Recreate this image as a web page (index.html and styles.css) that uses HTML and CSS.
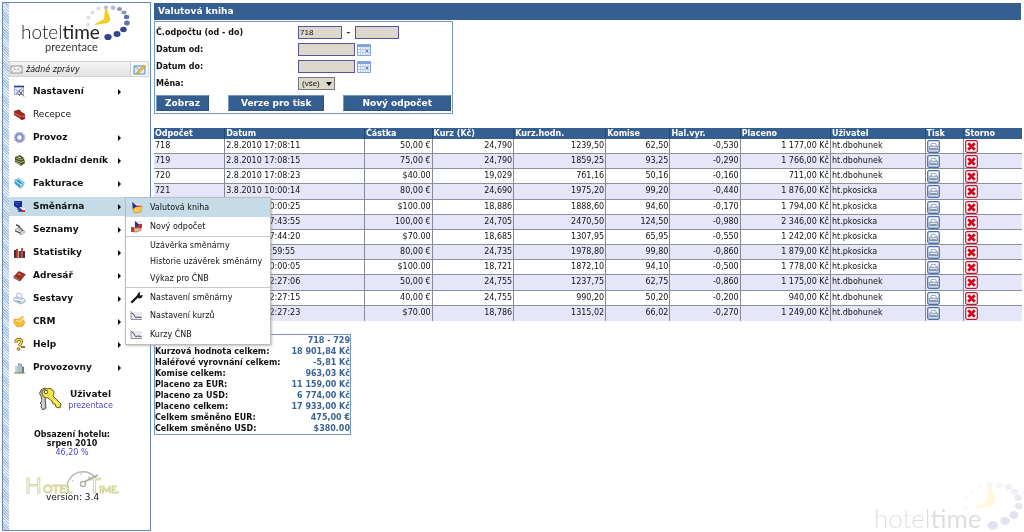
FILE: index.html
```
<!DOCTYPE html>
<html lang="cs">
<head>
<meta charset="utf-8">
<title>Valutová kniha</title>
<link rel="stylesheet" href="styles.css">
</head>
<body>
<svg class="defs" aria-hidden="true">
  <defs>
    <linearGradient id="blueface" x2="0" y2="1"><stop offset="0" stop-color="#fff"/><stop offset="1" stop-color="#c3d3ee"/></linearGradient>
    <symbol id="clock" viewBox="0 0 130 41">
      <text x="21" y="38" class="brand-text">hotel<tspan class="brand-strong">time</tspan></text>
      <g fill="#d9dbe6"><circle cx="88" cy="23.500" r="1.800"/><circle cx="88.500" cy="16.500" r="1.800"/><circle cx="92.500" cy="11.500" r="2"/><circle cx="98.500" cy="7.500" r="2"/></g>
      <g fill="#b4bad2"><circle cx="106" cy="6.500" r="2.100"/><circle cx="113" cy="6.800" r="2.200"/></g>
      <g fill="#8d97bd"><ellipse cx="119.500" cy="8" rx="2.600" ry="2.100"/><ellipse cx="124" cy="11.500" rx="2.600" ry="2.100"/></g>
      <g fill="#626fa5"><ellipse cx="126.600" cy="16" rx="2.700" ry="2.200"/><ellipse cx="127" cy="22" rx="2.800" ry="2.500"/></g>
      <g fill="#34458a"><ellipse cx="123.500" cy="28.500" rx="3.300" ry="2.800"/><ellipse cx="117" cy="33" rx="3.500" ry="2.900"/><ellipse cx="108" cy="36" rx="3.700" ry="3.100"/></g>
      <path d="M105 8h2l3 9q1 4-3 5l-12 2v-1l9-5z" fill="#f2cd22"/>
    </symbol>
    <symbol id="print" viewBox="0 0 13 13"><rect x=".7" y=".7" width="11.600" height="11.600" rx="1.500" fill="url(#blueface)" stroke="#4a6ea8" stroke-width="1.200"/><path d="M4 6l.5-2.500h4L9.500 6" fill="#fff" stroke="#7d8ea8" stroke-width=".7"/><path d="M2.800 6.200h7.600l.4 3.300H2.400z" fill="#dfe6ef" stroke="#62738e" stroke-width=".7"/><path d="M3.500 8.500h6" stroke="#66758c" stroke-width=".7"/></symbol>
    <symbol id="cancel" viewBox="0 0 13 13"><rect x=".7" y=".7" width="11.600" height="11.600" rx="1.500" fill="#fff" stroke="#c8102a" stroke-width="1.200"/><path d="M3.200 3.200l6.600 6.600M9.800 3.200l-6.600 6.600" stroke="#cf0a1e" stroke-width="2.800"/></symbol>
    <symbol id="calendar" viewBox="0 0 14 12"><rect width="14" height="12" rx="1" fill="#7fa3dc"/><rect x="1" y="3" width="12" height="8" fill="#edf3fc"/><path d="M1 5.500h12M1 8.500h12M3.500 3v8M6 3v8M8.500 3v8M11 3v8" stroke="#a9bfe3" stroke-width=".7"/><rect x="9" y="6" width="2" height="2" fill="#5d82bd"/></symbol>
    <symbol id="chart" viewBox="0 0 13 13"><rect x="1" y="3" width="11" height="7" fill="#e9eaee"/><path d="M1 2v8.500h11" fill="none" stroke="#888" stroke-width=".9"/><path d="M1.500 4q2 0 3 3t3 1l4 .5" fill="none" stroke="#454b65" stroke-width="1"/></symbol>
  </defs>
</svg>
<svg class="watermark" aria-hidden="true"><use href="#clock"/></svg>

<div class="page">
  <aside class="sidebar">
    <div class="logo">
      <svg class="logo-mark" viewBox="0 0 130 41" role="img" aria-label="hoteltime"><use href="#clock"/></svg>
      <div class="logo-sub">prezentace</div>
    </div>
    <div class="messages">
      <svg class="icon" viewBox="0 0 13 13"><path d="M1 3h11v7H1z" fill="#fff" stroke="#888" stroke-width=".9"/><path d="M1 3l5.500 4L12 3M1 10l4-4M12 10L8 6" fill="none" stroke="#999" stroke-width=".7"/></svg>
      <em>žádné zprávy</em>
      <button class="compose" aria-label="Nová zpráva"><svg class="icon" viewBox="0 0 13 13"><path d="M1 3h11v8H1z" fill="#dceafa" stroke="#5688bd"/><path d="M1 3l5.500 4L12 3" fill="none" stroke="#5688bd" stroke-width=".7"/><path d="M4 9l7-7 1.500 1.500-7 7-2 .4z" fill="#f4c33a" stroke="#b98313" stroke-width=".6"/></svg></button>
    </div>
    <nav class="menu">
      <a href="#"><svg class="icon" viewBox="0 0 13 13"><path d="M1.500 1.500h9v8h-9z" fill="#eef1fb" stroke="#7c83b5" stroke-width=".7"/><path d="M1 1.500h10" stroke="#27388d" stroke-width="1.600"/><path d="M3 4.500l2 2 4-3M3 8h3" fill="none" stroke="#3d4d94" stroke-width=".8"/><path d="M6 6l5 5.500M10 5l-4 6" stroke="#535b83" stroke-width="1"/></svg><span>Nastavení</span><i class="arrow"></i></a>
      <a href="#" class="plain"><svg class="icon" viewBox="0 0 13 13"><path d="M1 3l4-1 7 4v5l-3 1-8-5z" fill="#a52720"/><path d="M1 5l8 4 3-1" fill="none" stroke="#e0897a" stroke-width=".8"/><path d="M9 9v3M4 3l2-1 2 1.500" fill="none" stroke="#521310"/></svg><span>Recepce</span></a>
      <a href="#"><svg class="icon" viewBox="0 0 13 13"><circle cx="6.500" cy="6.500" r="3.700" fill="none" stroke="#8d91cc" stroke-width="3"/><circle cx="6.500" cy="6.500" r="5" fill="none" stroke="#b5b8e4" stroke-width="1.500" stroke-dasharray="2 2"/></svg><span>Provoz</span><i class="arrow"></i></a>
      <a href="#"><svg class="icon" viewBox="0 0 13 13"><path d="M2 3l5-2 4 3 1 5-4 3-6-4z" fill="#48502a"/><path d="M3 4l5 2 3-2M2.500 6.500l5.500 2 3.500-1.500M3 8.500l5 2" fill="none" stroke="#b6bd78" stroke-width=".9"/><path d="M5 3l3 1" stroke="#dde1b1"/></svg><span>Pokladní deník</span><i class="arrow"></i></a>
      <a href="#"><svg class="icon" viewBox="0 0 13 13"><path d="M1 3l5-2 6 5-4 6-6-5z" fill="#39a0c5"/><path d="M1 3l7 5 4-2M8 8v4" fill="none" stroke="#e4f7fc" stroke-width=".9"/><path d="M3 3l3-1 4 4" fill="none" stroke="#9bdcf0" stroke-width="1.200"/></svg><span>Fakturace</span><i class="arrow"></i></a>
      <div class="open">
        <a href="#" aria-expanded="true"><svg class="icon" viewBox="0 0 13 13"><path d="M1 1h8v6H6v2L1 6z" fill="#1b2b9d"/><path d="M2.500 2.500h1m2 0h1m-3 2h1" stroke="#7782cf"/><path d="M6 7v5M4 9h2" stroke="#26328d" stroke-width="1.200"/><path d="M7 8h5v2H7z" fill="#fff"/><path d="M7 10h5v2H7z" fill="#d52b35"/><path d="M6.500 7.500l3 2.500-3 2z" fill="#1c3c9a"/></svg><span>Směnárna</span><i class="arrow"></i></a>
        <div class="submenu">
          <a href="#" class="current"><svg class="icon" viewBox="0 0 13 13"><path d="M2 6h4l1-1h5l-1 6-7 1z" fill="#f6c64f" stroke="#c28b26" stroke-width=".6"/><path d="M4 3l7 1-1 2-5-.5z" fill="#fff"/><path d="M5 4.500h6l-1 1.500H6z" fill="#d63733"/><path d="M2 1l5 4-4 3z" fill="#1b329c"/></svg><span>Valutová kniha</span></a>
          <a href="#"><svg class="icon" viewBox="0 0 13 13"><path d="M4 1h8v4H4z" fill="#e8e9f1"/><path d="M5 4h7v4H5z" fill="#c92f32"/><path d="M5 1l4 3.500L5 8z" fill="#25308f"/><path d="M1 7h3v5H1z" fill="#b64136"/><path d="M4 8l3 0 4 0v2l-4 2H4z" fill="#e5b896" stroke="#8b553c" stroke-width=".6"/></svg><span>Nový odpočet</span></a>
          <a href="#" class="short ruled"><span>Uzávěrka směnárny</span></a>
          <a href="#" class="short"><span>Historie uzávěrek směnárny</span></a>
          <a href="#" class="short"><span>Výkaz pro ČNB</span></a>
          <a href="#" class="ruled"><svg class="icon" viewBox="0 0 13 13"><path d="M2 11l6-6" stroke="#151515" stroke-width="2.300" stroke-linecap="round"/><path d="M7 5l1-3 2.500-1-1 2.500 1 1L13 4l-1.500 3-3 .5z" fill="#151515"/></svg><span>Nastavení směnárny</span></a>
          <a href="#"><svg class="icon"><use href="#chart"/></svg><span>Nastavení kurzů</span></a>
          <a href="#"><svg class="icon"><use href="#chart"/></svg><span>Kurzy ČNB</span></a>
        </div>
      </div>
      <a href="#"><svg class="icon" viewBox="0 0 13 13"><path d="M2 7l6 5 4-3-6-5z" fill="#e5e5e5" stroke="#777" stroke-width=".7"/><path d="M3 2q3 0 4 3l3 3M2 8l6 2" fill="none" stroke="#555" stroke-width="1.300"/><path d="M5 6l4 3" stroke="#aaa"/></svg><span>Seznamy</span><i class="arrow"></i></a>
      <a href="#"><svg class="icon" viewBox="0 0 13 13"><path d="M1 4h2v8H1z" fill="#49303c"/><path d="M3 3h2v9H3z" fill="#b73939"/><path d="M6 5h2v7H6z" fill="#423e75"/><path d="M8 2h2v10H8z" fill="#cd4942"/><path d="M10 5h2v7h-2z" fill="#403442"/><path d="M5.500 5v7" stroke="#e5aa6d"/></svg><span>Statistiky</span><i class="arrow"></i></a>
      <a href="#"><svg class="icon" viewBox="0 0 13 13"><path d="M1 7l5-5 6 3-5 6z" fill="#a32e1b"/><path d="M1 7v2l6 3 5-6V5l-5 6z" fill="#d9b3a5" stroke="#662318" stroke-width=".8"/><path d="M5 5l3 1" stroke="#e68a62" stroke-width="1.200"/></svg><span>Adresář</span><i class="arrow"></i></a>
      <a href="#"><svg class="icon" viewBox="0 0 13 13"><path d="M3 6l1-5 5 1v4" fill="#f4faff" stroke="#99adc0" stroke-width=".7"/><path d="M1 6l3-1 8 2v3l-4 2-7-3z" fill="#d3dce6" stroke="#8d9bab" stroke-width=".7"/><path d="M1 7l7 2 4-2" fill="none" stroke="#f8fbff"/><path d="M4 9l4 1" stroke="#6e8db0"/></svg><span>Sestavy</span><i class="arrow"></i></a>
      <a href="#"><svg class="icon" viewBox="0 0 13 13"><path d="M1 4l5 0 4-3 0 4 2 2-2 4-6 1-3-4z" fill="#f7bd38" stroke="#d99322" stroke-width=".6"/><path d="M3 5l4 2 3-4" fill="none" stroke="#ffe9a4" stroke-width="1.300"/></svg><span>CRM</span><i class="arrow"></i></a>
      <a href="#"><svg class="icon" viewBox="0 0 13 13"><path d="M3 5V3q1-2 4-1.500 2.500 1 1 3.500L6 8" fill="none" stroke="#6c5412" stroke-width="3"/><path d="M3 5V3q1-2 4-1.500 2.500 1 1 3.500L6 8" fill="none" stroke="#f3d33b" stroke-width="1.700"/><circle cx="5.500" cy="11" r="1.500" fill="#e4bf2e" stroke="#6c5412" stroke-width=".6"/><path d="M8 8h4v2H8z" fill="#84763c"/></svg><span>Help</span><i class="arrow"></i></a>
      <a href="#"><svg class="icon" viewBox="0 0 13 13"><path d="M2 5h3v7H2z" fill="#b8c5ca"/><path d="M5 2l4 1v9H5z" fill="#8ea8b1"/><path d="M9 5l2 1v6H9z" fill="#637e8b"/><path d="M6 4v7M8 5v6M3 6v5" stroke="#e5f0f2" stroke-width=".7"/><path d="M1 12h11" stroke="#708c64"/></svg><span>Provozovny</span><i class="arrow"></i></a>
    </nav>
    <div class="user">
      <svg class="keys" viewBox="0 0 25 25"><path d="M4 3q5-4 7 1 0 4-3 5l1 12-3 2-2-3 1-2-2-2 2-2-1-5Q1 7 4 3z" fill="#bbb" stroke="#555" stroke-width="1"/><path d="M6 11v10" stroke="#eee"/><path d="M9 2q6-2 8 3 0 3-1 4l8 8-1 4-4-1-1-3-2 0-1-3-4-3q-6 0-6-6 1-3 4-3z" fill="#f2e541" stroke="#635c20" stroke-width="1"/><circle cx="9" cy="5" r="1.700" fill="#fff" stroke="#635c20"/><path d="M13 9l9 10" stroke="#fff9a0"/></svg>
      <div><b>Uživatel</b><a href="#">prezentace</a></div>
    </div>
    <div class="occupancy"><b>Obsazení hotelu:<br>srpen 2010</b><span>46,20 %</span></div>
    <div class="product">
      <svg class="product-mark" viewBox="0 0 100 34" role="img" aria-label="Hotel Time">
        <path d="M44 21A16 16 0 0 1 74 13" fill="none" stroke="#b8b8ba" stroke-width="1.500"/><path d="M49 13l2 2M58 5v3M67 9l-2 2" stroke="#c4c4c6"/>
        <g class="product-text"><text x="2" y="26" class="cap">H</text><text x="20" y="26" class="letters">OTEL</text><text x="65" y="26" class="cap">T</text><text x="76" y="26" class="letters small">IME.</text></g>
        <path d="M61 15L75 8" stroke="#aaaab0" stroke-width="1.500"/><circle cx="60" cy="17" r="2.500" fill="#fff" stroke="#b0b0ac" stroke-width="1.400"/>
      </svg>
      <div class="version">version: 3.4</div>
    </div>
  </aside>

  <main class="content">
    <h1>Valutová kniha</h1>
    <form class="filter">
      <div class="fields">
        <label for="no-from">Č.odpočtu (od - do)</label>
        <div class="controls"><input id="no-from" class="number" value="718"><b class="dash">-</b><input class="number" aria-label="Č.odpočtu do"></div>
        <label for="date-from">Datum od:</label>
        <div class="controls"><input id="date-from" class="date"><button type="button" class="pick" aria-label="Kalendář od"><svg><use href="#calendar"/></svg></button></div>
        <label for="date-to">Datum do:</label>
        <div class="controls"><input id="date-to" class="date"><button type="button" class="pick" aria-label="Kalendář do"><svg><use href="#calendar"/></svg></button></div>
        <label for="currency">Měna:</label>
        <div class="controls"><span class="select"><select id="currency"><option>(vše)</option></select></span></div>
      </div>
      <div class="actions"><button type="button">Zobraz</button><button type="button">Verze pro tisk</button><button type="button">Nový odpočet</button></div>
    </form>

    <table class="ledger">
      <colgroup><col class="c-no"><col class="c-date"><col class="c-sum"><col class="c-rate"><col class="c-value"><col class="c-fee"><col class="c-round"><col class="c-paid"><col class="c-user"><col class="c-print"><col class="c-cancel"></colgroup>
      <thead><tr><th>Odpočet</th><th>Datum</th><th>Částka</th><th>Kurz (Kč)</th><th>Kurz.hodn.</th><th>Komise</th><th>Hal.vyr.</th><th>Placeno</th><th>Uživatel</th><th>Tisk</th><th>Storno</th></tr></thead>
      <tbody id="rows"></tbody>
    </table>

    <table class="summary">
      <tbody>
        <tr><th>Číslo odpočtu (od - do):</th><td>718 - 729</td></tr>
        <tr><th>Kurzová hodnota celkem:</th><td>18 901,84 Kč</td></tr>
        <tr><th>Haléřové vyrovnání celkem:</th><td>-5,81 Kč</td></tr>
        <tr><th>Komise celkem:</th><td>963,03 Kč</td></tr>
        <tr><th>Placeno za EUR:</th><td>11 159,00 Kč</td></tr>
        <tr><th>Placeno za USD:</th><td>6 774,00 Kč</td></tr>
        <tr><th>Placeno celkem:</th><td>17 933,00 Kč</td></tr>
        <tr><th>Celkem směněno EUR:</th><td>475,00 €</td></tr>
        <tr><th>Celkem směněno USD:</th><td>$380.00</td></tr>
      </tbody>
    </table>
  </main>
</div>
<script src="rows.js"></script>
</body>
</html>
```
FILE: rows.js
```
const records = [
  ["718", "2.8.2010 17:08:11", "50,00 €", "24,790", "1239,50", "62,50", "-0,530", "1 177,00 Kč", "ht.dbohunek"],
  ["719", "2.8.2010 17:08:15", "75,00 €", "24,790", "1859,25", "93,25", "-0,290", "1 766,00 Kč", "ht.dbohunek"],
  ["720", "2.8.2010 17:08:23", "$40.00", "19,029", "761,16", "50,16", "-0,160", "711,00 Kč", "ht.dbohunek"],
  ["721", "3.8.2010 10:00:14", "80,00 €", "24,690", "1975,20", "99,20", "-0,440", "1 876,00 Kč", "ht.pkosicka"],
  ["722", "3.8.2010 10:00:25", "$100.00", "18,886", "1888,60", "94,60", "-0,170", "1 794,00 Kč", "ht.pkosicka"],
  ["723", "3.8.2010 17:43:55", "100,00 €", "24,705", "2470,50", "124,50", "-0,980", "2 346,00 Kč", "ht.pkosicka"],
  ["724", "3.8.2010 17:44:20", "$70.00", "18,685", "1307,95", "65,95", "-0,550", "1 242,00 Kč", "ht.pkosicka"],
  ["725", "4.8.2010 9:59:55", "80,00 €", "24,735", "1978,80", "99,80", "-0,860", "1 879,00 Kč", "ht.pkosicka"],
  ["726", "4.8.2010 10:00:05", "$100.00", "18,721", "1872,10", "94,10", "-0,500", "1 778,00 Kč", "ht.pkosicka"],
  ["727", "5.8.2010 12:27:06", "50,00 €", "24,755", "1237,75", "62,75", "-0,860", "1 175,00 Kč", "ht.dbohunek"],
  ["728", "5.8.2010 12:27:15", "40,00 €", "24,755", "990,20", "50,20", "-0,200", "940,00 Kč", "ht.dbohunek"],
  ["729", "5.8.2010 12:27:23", "$70.00", "18,786", "1315,02", "66,02", "-0,270", "1 249,00 Kč", "ht.dbohunek"]
];

const action = (icon, label) =>
  `<td><button class="row-action" aria-label="${label}"><svg><use href="#${icon}"/></svg></button></td>`;

document.getElementById("rows").innerHTML = records.map(record => {
  const cells = record.map((value, i) => `<td${i > 1 && i < 8 ? ' class="amount"' : ""}>${value}</td>`);
  return `<tr>${cells.join("")}${action("print", "Tisk")}${action("cancel", "Storno")}</tr>`;
}).join("");
```
FILE: styles.css
```
* { box-sizing: border-box; }
body {
  margin: 0;
  background: #fff;
  color: #111;
  font: 8px/11px "DejaVu Sans", Verdana, sans-serif;
}
button, input, select { margin: 0; padding: 0; font: inherit; color: inherit; }
a { color: inherit; text-decoration: none; }
svg { display: block; }
.defs { position: absolute; width: 0; height: 0; }
.icon { width: 13px; height: 13px; flex: none; }

.page { display: flex; align-items: stretch; gap: 3px; min-height: 100vh; padding: 2px 2px 1px; }
.watermark { position: fixed; right: 1px; bottom: 0; width: 178px; height: 56px; opacity: .15; z-index: -1; }

.brand-text { font: 300 19px Lato, sans-serif; fill: #222; }
.brand-strong { font-weight: 400; }

.sidebar {
  flex: none;
  width: 149px;
  border: 1px solid #6487b8;
  padding: 0 1px 0 6px;
  background: repeating-linear-gradient(45deg, #a9c2e0 0 1px, #e9f0f8 1px 2px) left / 6px 100% no-repeat;
}
.logo { height: 60px; }
.logo-mark { width: 130px; height: 41px; margin: -2px 0 0 -9px; }
.logo-sub { padding-left: 36px; font: 11px/10px Lato, sans-serif; color: #333; }
.messages {
  display: flex;
  align-items: center;
  gap: 3px;
  height: 16px;
  border: 1px solid #d4d4d4;
  background: linear-gradient(#f4f4f4, #e2e2e2);
}
.messages em { flex: 1; }
.compose { width: 18px; height: 14px; padding-left: 2px; border: 0; border-left: 1px solid #ccc; background: #f6f9fc; }

.menu { display: grid; gap: 4px; padding-top: 5px; }
.menu a { display: flex; align-items: center; height: 19px; font-size: 9px; font-weight: bold; padding-left: 4px; gap: 7px; }
.menu a span { flex: 1; white-space: nowrap; }
.menu .plain { font-weight: normal; }
.arrow { margin-right: 28px; border: 3px solid transparent; border-left-color: #000; border-right: 0; }
.open { position: relative; background: #c5dce8; }
.submenu {
  position: absolute;
  left: 116px;
  top: 0;
  z-index: 2;
  width: 146px;
  border: 1px solid #bcbcbc;
  background: #fff;
  box-shadow: 1px 1px 2px #8888;
}
.menu .submenu a { font-size: 8px; font-weight: normal; padding: 0 3px 0 4px; }
.menu .submenu .current { background: #c5dce8; }
.menu .submenu .short { height: 17px; padding-left: 24px; }
.menu .submenu .ruled { border-top: 1px solid #c8c8c8; }

.user { display: flex; align-items: center; justify-content: center; gap: 6px; padding: 10px 8px 0 0; }
.user b, .user a { display: block; text-align: center; line-height: 12px; }
.user b { font-size: 9px; }
.user a, .occupancy span { color: #4a48c8; }
.keys { width: 25px; height: 25px; }
.occupancy { padding: 18px 14px 0 0; text-align: center; line-height: 9px; }
.occupancy span { display: block; line-height: 10px; }
.product { padding: 9px 0 0 14px; }
.product-mark { width: 100px; height: 34px; }
.product-text { font-family: Lato, sans-serif; fill: #fff; stroke: #d5d69b; stroke-width: 1; }
.product-text .cap { font-size: 22px; }
.product-text .letters { font-size: 12px; }
.product-text .small { font-size: 10px; }
.version { position: relative; margin-top: -9px; padding-left: 23px; font-size: 9px; }

.content { flex: 1; min-width: 0; padding-top: 1px; }
h1 { margin: 0 1px 1px 0; padding-left: 4px; background: #365f91; color: #fff; font-size: 9px; line-height: 17px; }
.filter { width: 299px; border: 1px solid #7896c4; padding: 2px 1px; }
.fields { display: grid; grid-template-columns: 142px 1fr; grid-auto-rows: 17px; align-items: center; font-weight: bold; }
.controls { display: flex; align-items: center; gap: 2px; }
.controls input { height: 13px; padding: 0 1px; border: 1px solid #57549a; background: #dcd8cc; font: 8px "Liberation Sans", Arial, sans-serif; }
.number { width: 44px; }
.date { width: 57px; }
.dash { width: 9px; text-align: center; }
.pick { border: 0; background: none; }
.pick svg { width: 14px; height: 12px; }
.select { position: relative; }
.select select { appearance: none; display: block; width: 37px; height: 13px; padding-left: 3px; border: 1px solid #777; border-radius: 0; background: #dcd8cc; font: 8px/11px "Liberation Sans", Arial, sans-serif; }
.select::after { content: ""; position: absolute; right: 3px; top: 5px; border: 3px solid transparent; border-top: 4px solid #000; border-bottom: 0; }
.actions { display: flex; justify-content: space-between; padding-top: 3px; }
.actions button { height: 16px; padding: 0 8px; border: 1px solid #2c5282; border-top-color: #7595bd; border-left-color: #7595bd; background: #365f91; color: #fff; font-size: 9px; font-weight: bold; }
.actions button:nth-child(2) { padding: 0 12px; }
.actions button:nth-child(3) { padding: 0 18px; }

.ledger { width: 100%; height: 193px; margin-top: 14px; border-spacing: 0; table-layout: fixed; }
.ledger th, .ledger td { padding: 0 1px; text-align: left; vertical-align: top; white-space: nowrap; }
.ledger th { height: 11px; background: #365f91; color: #fff; border-right: 1px solid #244a78; }
.ledger td { height: 15px; border-right: 1px solid #858b94; border-bottom: 1px solid #8c9299; line-height: 13px; }
.ledger tr > :last-child { border-right: 0; }
.ledger tbody tr:last-child td { border-bottom: 0; }
.ledger tbody tr:nth-child(even) { background: #e6e6fa; }
.ledger .amount { text-align: right; }
.row-action { display: block; border: 0; background: none; }
.row-action svg { width: 13px; height: 13px; margin-top: 1px; }
.c-no { width: 8.2%; }
.c-date { width: 16.1%; }
.c-sum { width: 7.8%; }
.c-rate { width: 9.4%; }
.c-value { width: 10.6%; }
.c-fee { width: 7.4%; }
.c-round { width: 8.1%; }
.c-paid { width: 10.4%; }
.c-user { width: 10.9%; }
.c-print { width: 4.4%; }
.c-cancel { width: 6.7%; }

.summary { width: 197px; margin-top: 13px; border: 1px solid #7896c4; border-spacing: 0; }
.summary th, .summary td { padding: 0; font-weight: bold; white-space: nowrap; }
.summary th { text-align: left; }
.summary td { text-align: right; color: #3c6494; }
```
